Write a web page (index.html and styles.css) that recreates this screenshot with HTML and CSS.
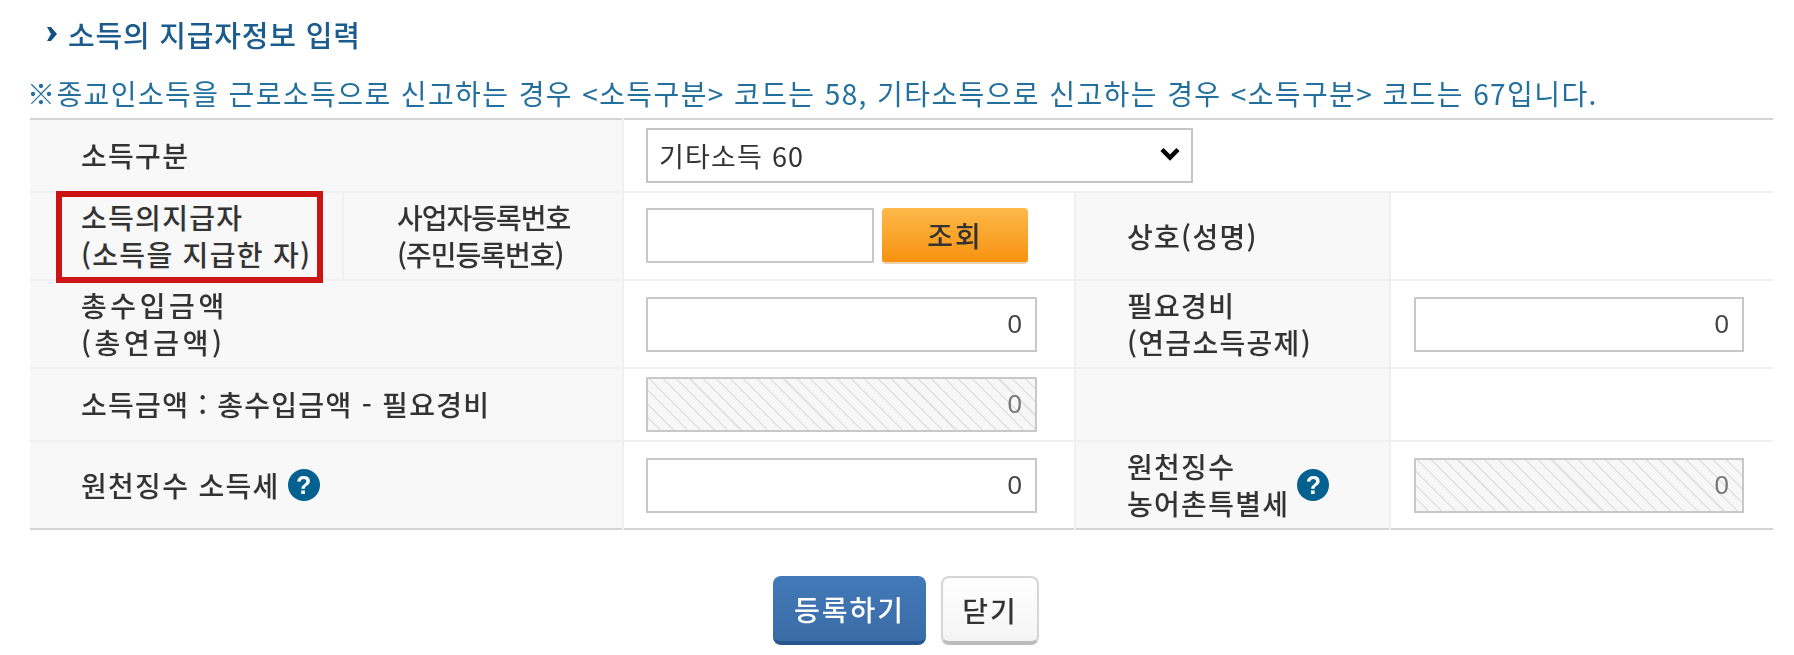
FILE: index.html
```html
<!DOCTYPE html>
<html lang="ko">
<head>
    <meta charset="UTF-8">
    <title>소득의 지급자정보 입력</title>
    <link rel="stylesheet" href="styles.css">
</head>
<body>
    <div class="page">
        <h2 class="title">
            <svg class="title-arrow" width="12" height="14" viewBox="0 0 12 14"><path d="M1 0h4l6 7-6 7H1l4-7z" fill="#14507f"/></svg>
            소득의 지급자정보 입력
        </h2>
        <p class="note">※종교인소득을 근로소득으로 신고하는 경우 &lt;소득구분&gt; 코드는 58, 기타소득으로 신고하는 경우 &lt;소득구분&gt; 코드는 67입니다.</p>
        <table class="form-table">
            <colgroup>
                <col class="col-a"><col class="col-b"><col class="col-c"><col class="col-d"><col class="col-e">
            </colgroup>
            <tr class="row-short">
                <th colspan="2">소득구분</th>
                <td colspan="3">
                    <div class="select-wrap">
                        <select class="select">
                            <option>기타소득 60</option>
                        </select>
                        <svg class="select-arrow" width="22" height="14" viewBox="0 0 22 14"><path d="M3 2.5l8 8 8-8" fill="none" stroke="#000" stroke-width="4.5"/></svg>
                    </div>
                </td>
            </tr>
            <tr>
                <th class="payer">
                    소득의지급자<br>(소득을 지급한 자)
                    <span class="red-box"></span>
                </th>
                <th class="reg-no">사업자등록번호<br>(주민등록번호)</th>
                <td>
                    <div class="lookup">
                        <input class="input input-reg" type="text">
                        <button class="btn-lookup" type="button">조회</button>
                    </div>
                </td>
                <th>상호(성명)</th>
                <td></td>
            </tr>
            <tr>
                <th colspan="2" class="wide">총수입금액<br>(총연금액)</th>
                <td><input class="input" type="text" value="0"></td>
                <th>필요경비<br>(연금소득공제)</th>
                <td><input class="input input-right" type="text" value="0"></td>
            </tr>
            <tr class="row-short">
                <th colspan="2">소득금액 : 총수입금액 - 필요경비</th>
                <td><input class="input input-off" type="text" value="0" disabled></td>
                <th></th>
                <td></td>
            </tr>
            <tr class="row-last">
                <th colspan="2">
                    <div class="with-help">원천징수 소득세 <span class="help">?</span></div>
                </th>
                <td><input class="input" type="text" value="0"></td>
                <th>
                    <div class="with-help"><span>원천징수<br>농어촌특별세</span> <span class="help">?</span></div>
                </th>
                <td><input class="input input-right input-off" type="text" value="0" disabled></td>
            </tr>
        </table>
        <div class="actions">
            <button class="btn btn-save" type="button">등록하기</button>
            <button class="btn btn-close" type="button">닫기</button>
        </div>
    </div>
</body>
</html>
```

FILE: styles.css
```css
* {
    margin: 0;
    padding: 0;
    box-sizing: border-box;
}

body {
    background: #fff;
    font-family: "Noto Sans CJK KR", "Liberation Sans", sans-serif;
    color: #333;
    overflow: hidden;
}

.page {
    width: 1794px;
    height: 655px;
    padding: 0 21px 0 30px;
    filter: blur(0.55px);
}

.title {
    display: flex;
    align-items: center;
    gap: 10px;
    height: 68px;
    padding-left: 16px;
    font-size: 29px;
    font-weight: 500;
    letter-spacing: 0.8px;
    color: #1b5c8c;
}

.note {
    height: 50px;
    margin-left: -3px;
    font-size: 28px;
    line-height: 50px;
    letter-spacing: 1.4px;
    color: #23709f;
    white-space: nowrap;
}

.form-table {
    width: 1743px;
    table-layout: fixed;
    border-collapse: collapse;
    border-top: 2px solid #d4d4d4;
    border-bottom: 2px solid #d4d4d4;
}

.col-a { width: 313px; }
.col-b { width: 280px; }
.col-c { width: 452px; }
.col-d { width: 315px; }
.col-e { width: 383px; }

.form-table tr {
    height: 88px;
}

.form-table .row-short {
    height: 73px;
}

.form-table th,
.form-table td {
    border-bottom: 2px solid #f0f0f0;
    border-left: 2px solid #f0f0f0;
    vertical-align: middle;
}

.form-table tr th:first-child {
    border-left: 0;
}

.form-table .row-last th,
.form-table .row-last td {
    border-bottom: 0;
}

.form-table th {
    padding-left: 51px;
    background: #f8f8f8;
    font-size: 28px;
    font-weight: 500;
    line-height: 37px;
    letter-spacing: 1.3px;
    text-align: left;
    white-space: nowrap;
    color: #333;
}

.form-table td {
    padding-left: 22px;
    background: #fff;
}

.form-table .reg-no {
    padding-left: 53px;
    letter-spacing: -1px;
}

.form-table .wide {
    letter-spacing: 3.6px;
}

.payer {
    position: relative;
}

.red-box {
    position: absolute;
    left: 26px;
    top: -2px;
    width: 267px;
    height: 92px;
    border: 6px solid #cc1414;
}

.select-wrap {
    position: relative;
    width: 547px;
    height: 55px;
}

.select {
    width: 100%;
    height: 100%;
    padding-left: 11px;
    appearance: none;
    background: #fff;
    border: 2px solid #c4c4c4;
    border-radius: 0;
    font-family: inherit;
    font-size: 27px;
    letter-spacing: 1.2px;
    color: #333;
}

.select-arrow {
    position: absolute;
    right: 12px;
    top: 19px;
    pointer-events: none;
}

.input {
    display: block;
    width: 391px;
    height: 55px;
    padding-right: 13px;
    background: #fff;
    border: 2px solid #c8c8c8;
    border-radius: 0;
    font-family: "Liberation Sans", sans-serif;
    font-size: 26px;
    text-align: right;
    color: #444;
}

.input-reg {
    width: 228px;
}

.input-right {
    width: 330px;
    margin-left: 1px;
}

.input-off {
    color: #777;
    background: repeating-linear-gradient(45deg, #f7f7f7 0, #f7f7f7 8px, #e2e2e2 8px, #e2e2e2 9.5px);
}

.lookup {
    display: flex;
    gap: 8px;
}

.btn-lookup {
    width: 146px;
    height: 56px;
    background: linear-gradient(#fdb94a, #f7920f);
    border: 0;
    border-bottom: 2px solid #e9d2ae;
    border-radius: 4px;
    font-family: inherit;
    font-size: 28px;
    font-weight: 500;
    letter-spacing: 2px;
    color: #333;
}

.with-help {
    display: flex;
    align-items: center;
    gap: 8px;
}

.help {
    display: inline-block;
    width: 32px;
    height: 32px;
    background: #04608f;
    border-radius: 50%;
    font-family: "Liberation Sans", sans-serif;
    font-size: 25px;
    font-weight: 700;
    line-height: 32px;
    letter-spacing: 0;
    text-align: center;
    color: #fff;
}

.actions {
    display: flex;
    justify-content: center;
    gap: 15px;
    padding: 46px 0 0 9px;
}

.btn {
    height: 69px;
    border-radius: 8px;
    font-family: inherit;
    font-size: 28px;
    font-weight: 500;
    letter-spacing: 2px;
}

.btn-save {
    width: 153px;
    background: linear-gradient(#4279b8, #3a6ca6);
    border: 0;
    border-bottom: 4px solid #27568c;
    color: #fff;
}

.btn-close {
    width: 98px;
    background: linear-gradient(#fff, #f4f4f4);
    border: 2px solid #d6d6d6;
    border-bottom: 4px solid #bcbcbc;
    color: #333;
}
```
